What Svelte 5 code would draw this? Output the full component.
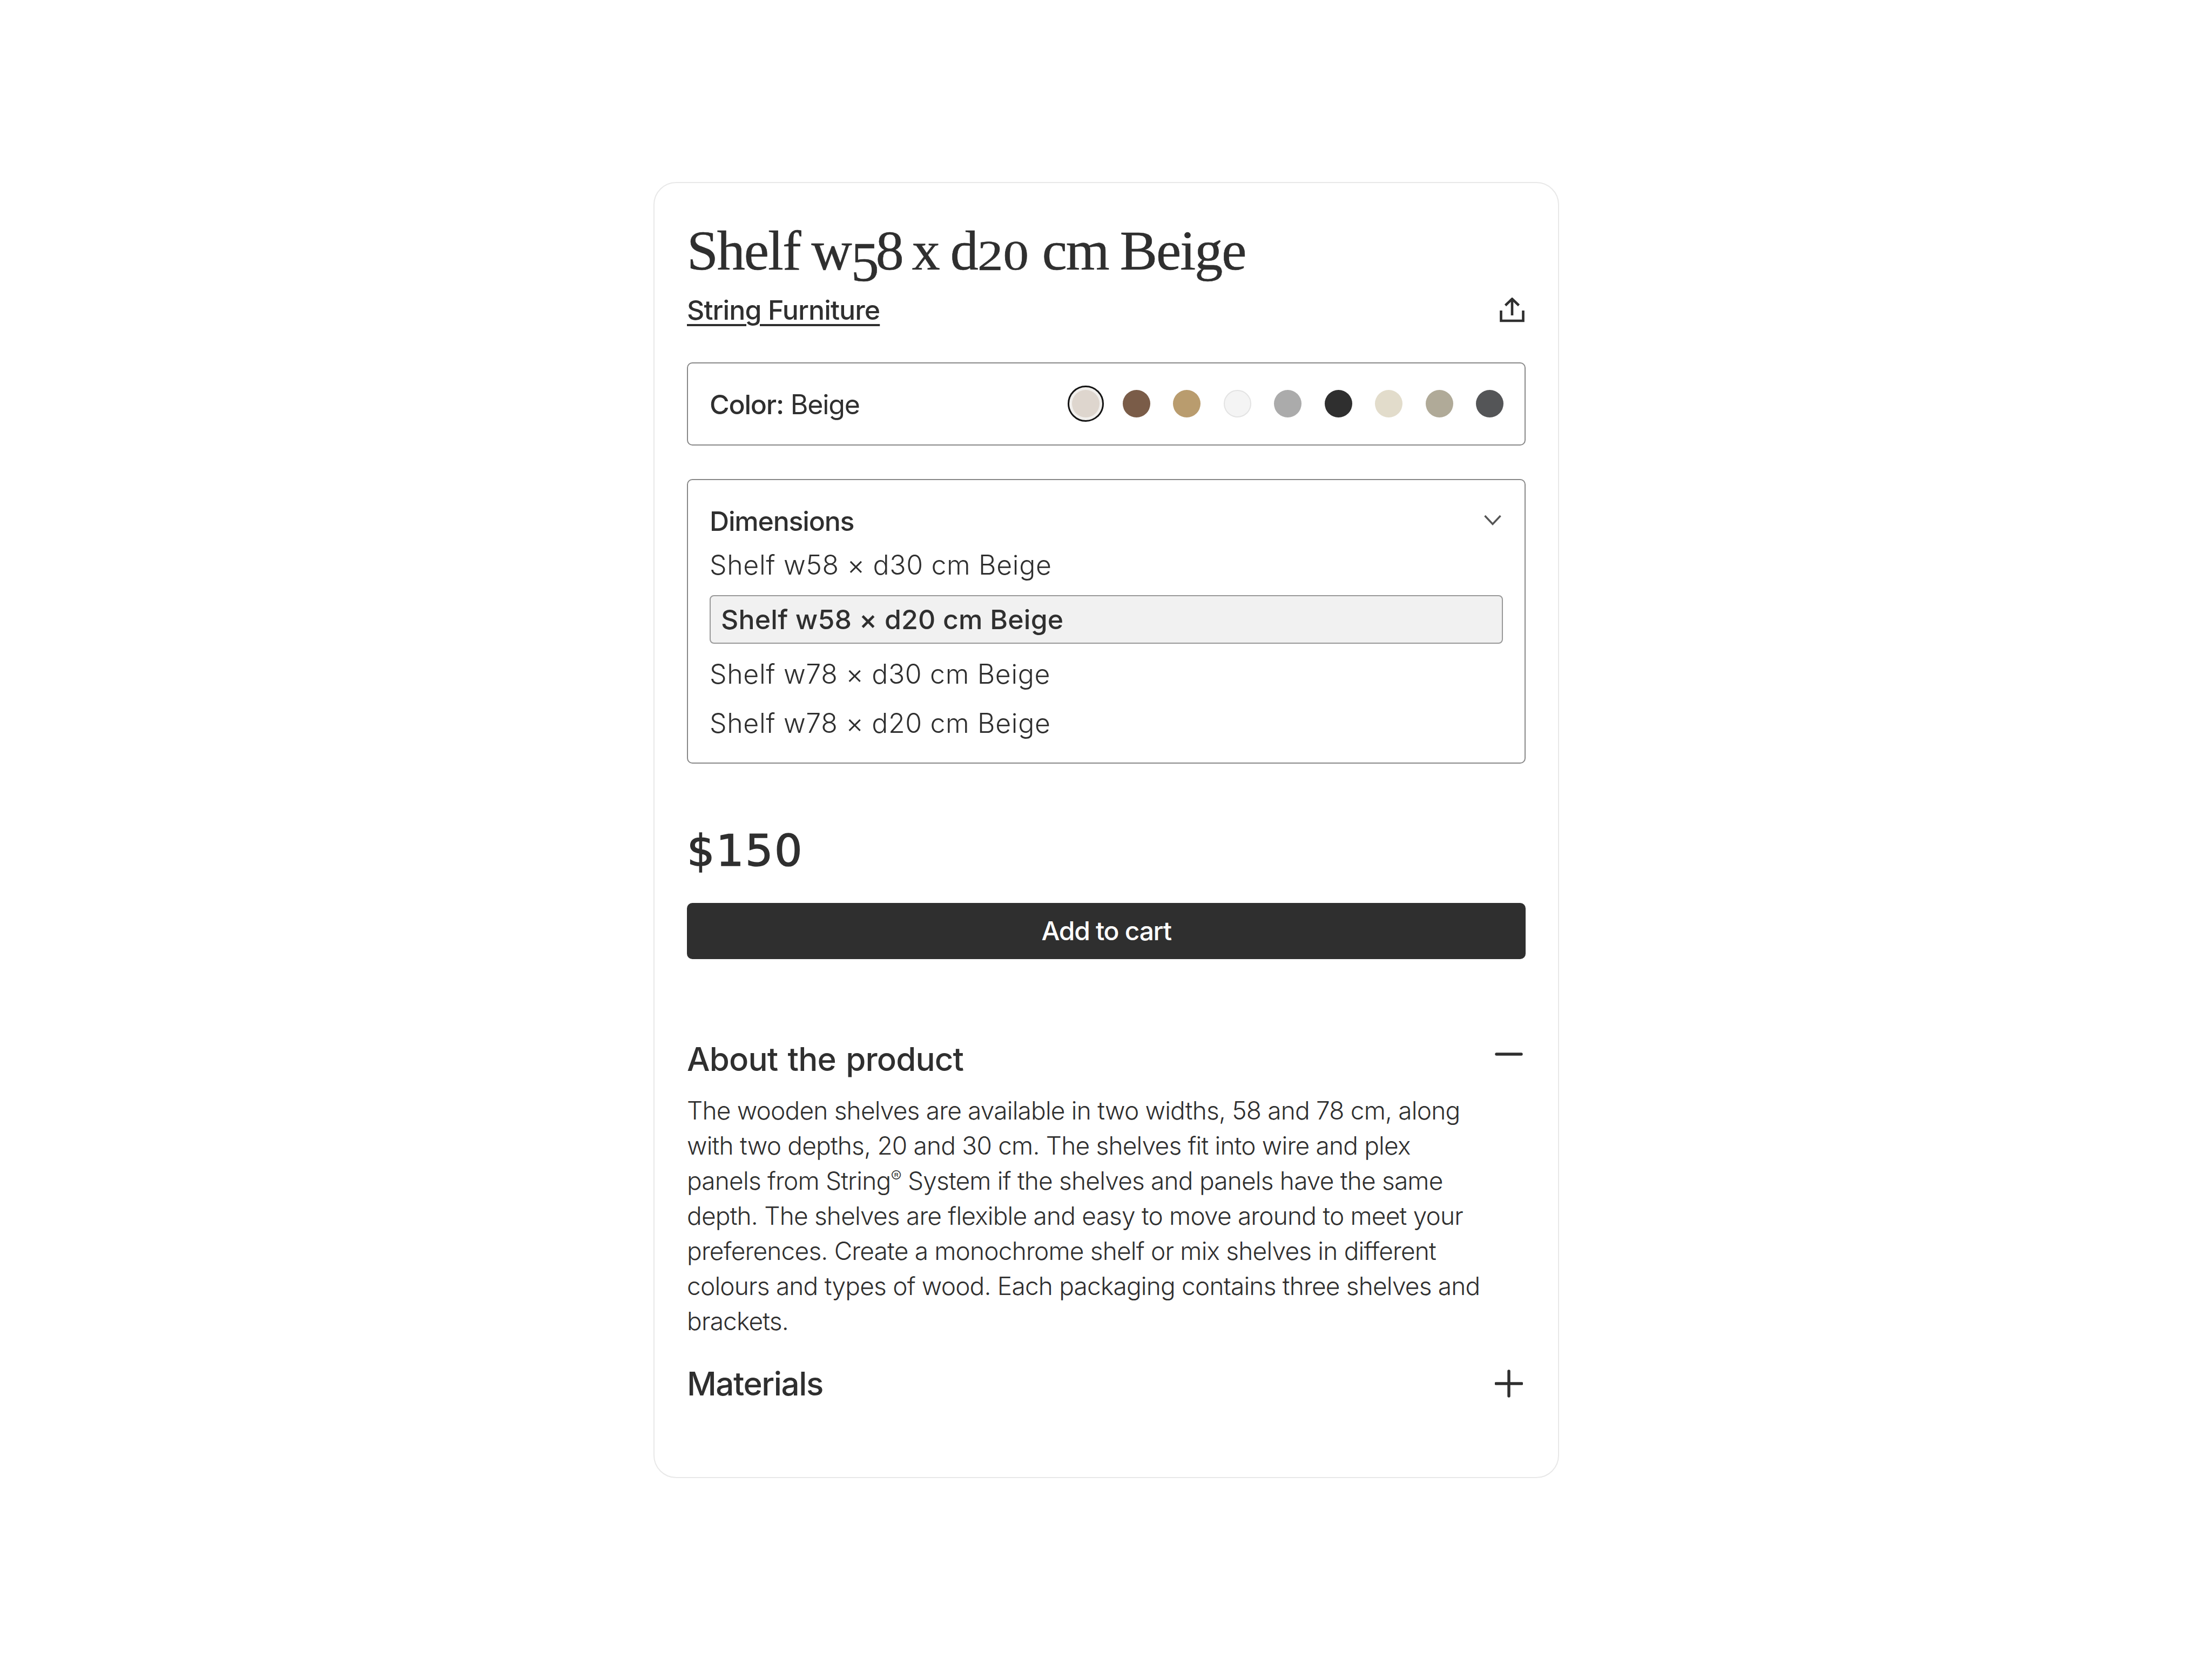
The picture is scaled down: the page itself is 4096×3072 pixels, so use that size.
<script>
  const swatches = [
    { c: '#ded6ce', sel: true },
    { c: '#7a5c48' },
    { c: '#b99c6e' },
    { c: '#f4f4f4', line: true },
    { c: '#ababab' },
    { c: '#2f2f2f' },
    { c: '#e2dccb' },
    { c: '#b0aa98' },
    { c: '#545557' }
  ];
  const options = [
    { t: 'Shelf w58 × d30 cm Beige' },
    { t: 'Shelf w58 × d20 cm Beige', sel: true },
    { t: 'Shelf w78 × d30 cm Beige' },
    { t: 'Shelf w78 × d20 cm Beige' }
  ];
</script>

<main class="card">
  <h1>Shelf w<span class="num down">5</span><span class="num">8</span> x d<span class="small">20</span> cm Beige</h1>
  <div class="brand-row">
    <a class="brand" href="#brand">String Furniture</a>
    <svg class="share" width="46" height="46" viewBox="0 0 46 46" fill="none" stroke="#2f2f2f" stroke-width="4.6">
      <path d="M23 33V3M10.5 14.5 23 2.5l12.500 12" />
      <path d="M2.500 24v19h41V24" />
    </svg>
  </div>

  <section class="color">
    <span class="label"><b>Color:</b> Beige</span>
    <div class="swatches">
      {#each swatches as s}
        <span class="swatch" class:sel={s.sel} class:line={s.line} style="background:{s.c}"></span>
      {/each}
    </div>
  </section>

  <section class="dim">
    <div class="dim-head">
      <span>Dimensions</span>
      <svg width="32" height="20" viewBox="0 0 32 20" fill="none" stroke="#555" stroke-width="3.4">
        <path d="M1.500 2 16 17.500 30.500 2" />
      </svg>
    </div>
    <div class="options">
      {#each options as o}
        <div class="option" class:active={o.sel}>{o.t}</div>
      {/each}
    </div>
  </section>

  <div class="price">$150</div>
  <button class="cart">Add to cart</button>

  <div class="acc about">
    <h2>About the product</h2>
    <svg class="acc-icon" width="52" height="52" viewBox="0 0 52 52" fill="none" stroke="#2f2f2f" stroke-width="5.4" stroke-linecap="round">
      <path d="M3 26h46" />
    </svg>
  </div>
  <p class="desc">
    The wooden shelves are available in two widths, 58 and 78 cm, along<br />
    with two depths, 20 and 30 cm. The shelves fit into wire and plex<br />
    panels from String<sup>®</sup> System if the shelves and panels have the same<br />
    depth. The shelves are flexible and easy to move around to meet your<br />
    preferences. Create a monochrome shelf or mix shelves in different<br />
    colours and types of wood. Each packaging contains three shelves and<br />
    brackets.
  </p>
  <div class="acc materials">
    <h2>Materials</h2>
    <svg class="acc-icon" width="52" height="52" viewBox="0 0 52 52" fill="none" stroke="#2f2f2f" stroke-width="5.4" stroke-linecap="round">
      <path d="M2 26h48M26 3v46" />
    </svg>
  </div>
</main>

<style>
  :global(body) {
    margin: 0;
    background: #fff;
  }
  .card {
    box-sizing: border-box;
    width: 1677px;
    margin: 337px auto 0;
    padding: 65px 59.3px 137px 60.5px;
    border: 2.67px solid #e8e8e8;
    border-radius: 42px;
    background: #fff;
    color: #2f2f2f;
    font-family: Inter, "Liberation Sans", sans-serif;
  }
  h1 {
    margin: 0;
    font-family: "Liberation Serif", serif;
    font-size: 104px;
    line-height: 120px;
    font-weight: 400;
    letter-spacing: -2px;
    word-spacing: -3px;
    -webkit-text-stroke: 0.6px #2f2f2f;
  }
  h1 .num {
    letter-spacing: -6px;
  }
  h1 .down {
    position: relative;
    top: 0.2em;
  }
  h1 .small {
    display: inline-block;
    font-size: 0.76em;
    line-height: 0;
    letter-spacing: 0;
    transform: scaleX(1.2);
    transform-origin: left;
    margin-right: 20px;
  }
  .brand-row {
    display: flex;
    justify-content: space-between;
    align-items: center;
    margin-top: 20px;
    height: 60px;
  }
  .brand {
    color: inherit;
    font-size: 50px;
    line-height: 60px;
    font-weight: 500;
    letter-spacing: -0.9px;
    text-decoration: underline;
    text-decoration-thickness: 4px;
    text-underline-offset: 8px;
  }
  .share {
    margin-right: 2px;
  }
  .color {
    box-sizing: border-box;
    display: flex;
    justify-content: space-between;
    align-items: center;
    height: 153.500px;
    margin-top: 67px;
    padding: 0 39px 0 40px;
    border: 2.67px solid #888;
    border-radius: 10px;
  }
  .label {
    padding-top: 4px;
    font-size: 50px;
    line-height: 65px;
    font-weight: 400;
    letter-spacing: -1.2px;
  }
  .label b {
    font-weight: 500;
  }
  .swatches {
    display: flex;
    align-items: center;
    gap: 42.5px;
  }
  .swatch {
    box-sizing: border-box;
    width: 51px;
    height: 51px;
    border-radius: 50%;
  }
  .swatch.line {
    border: 2px solid #e3e3e3;
  }
  .swatch.sel {
    outline: 3px solid #141414;
    outline-offset: 5px;
    box-shadow: 0 0 0 5px #f1efec;
  }
  .dim {
    margin-top: 62.500px;
    padding: 46px 40px 27px;
    border: 2.67px solid #888;
    border-radius: 10px;
  }
  .dim-head {
    display: flex;
    justify-content: space-between;
    align-items: center;
    height: 60px;
    font-size: 50px;
    line-height: 60px;
    font-weight: 500;
    letter-spacing: -1.200px;
  }
  .dim-head svg {
    margin: 0 3px 5px 0;
  }
  .options {
    margin-top: 5.500px;
    display: flex;
    flex-direction: column;
  }
  .option {
    display: flex;
    align-items: center;
    height: 91px;
    font-size: 50px;
    font-weight: 300;
    letter-spacing: 0.65px;
    white-space: pre;
  }
  .option.active {
    box-sizing: border-box;
    height: 90px;
    margin: 10px 0 11px;
    padding-left: 19px;
    border: 2.67px solid #999;
    border-radius: 8px;
    background: #f1f1f1;
    font-weight: 500;
    letter-spacing: 0.2px;
  }
  .price {
    margin-top: 111.500px;
    font-family: "DejaVu Sans", sans-serif;
    font-size: 81px;
    line-height: 100px;
    font-weight: 400;
    letter-spacing: 2.5px;
    -webkit-text-stroke: 1.6px #2f2f2f;
  }
  .cart {
    display: block;
    width: 100%;
    height: 104px;
    margin-top: 46.500px;
    padding: 0;
    border: 0;
    border-radius: 10px;
    background: #2f2f2f;
    color: #fff;
    font: 500 48px Inter, "Liberation Sans", sans-serif;
    letter-spacing: -1.3px;
  }
  .acc {
    display: flex;
    justify-content: space-between;
    height: 72px;
  }
  .acc h2 {
    margin: 0;
    font-size: 60px;
    line-height: 72px;
    font-weight: 500;
    letter-spacing: -1.400px;
  }
  .acc-icon {
    margin-right: 5px;
  }
  .about {
    margin-top: 149px;
    align-items: flex-start;
  }
  .about h2 {
    letter-spacing: -0.8px;
    word-spacing: 3px;
  }
  .about .acc-icon {
    margin-top: 1px;
  }
  .materials {
    margin-top: 47px;
    align-items: center;
  }
  .desc {
    margin: 27px 0 0;
    font-size: 46px;
    line-height: 65px;
    font-weight: 300;
    letter-spacing: -0.8px;
    white-space: nowrap;
  }
  sup {
    font-size: 30px;
    line-height: 0;
    vertical-align: 14px;
  }
</style>
